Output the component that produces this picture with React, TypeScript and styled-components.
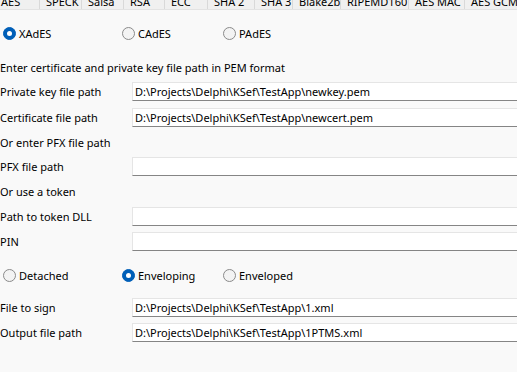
import React from "react";
import styled, { createGlobalStyle } from "styled-components";

const Global = createGlobalStyle`
  html, body { margin: 0; padding: 0; background: #f9f9f9; overflow: hidden; }
  body { font-family: "Noto Sans", "Segoe UI", sans-serif; font-size: 11px; color: #000; }
`;

const Page = styled.div`
  width: 517px;
  height: 372px;
  overflow: hidden;
  background: #f9f9f9;
  display: flex;
  flex-direction: column;
`;

const TabStrip = styled.div`
  height: 9px;
  display: flex;
  background: #f0f0f0;
  border-bottom: 1px solid #e3e3e3;
  overflow: hidden;
  flex-shrink: 0;
`;

const Tab = styled.div<{ $w: number; $pad: number }>`
  width: ${(p) => p.$w}px;
  padding-left: ${(p) => p.$pad}px;
  flex-shrink: 0;
  height: 9px;
  box-sizing: border-box;
  border-right: 1px solid #d9d9d9;
  display: flex;
  align-items: flex-end;
  justify-content: flex-start;
  line-height: 15px;
  white-space: nowrap;
`;

const Row = styled.div<{ $top: number }>`
  margin-top: ${(p) => p.$top}px;
  height: 19px;
  display: flex;
  align-items: center;
  flex-shrink: 0;
  white-space: nowrap;
`;

const Label = styled.div`
  width: 132px;
  flex-shrink: 0;
  line-height: 19px;
`;

const Input = styled.div`
  width: 420px;
  flex-shrink: 0;
  height: 19px;
  box-sizing: border-box;
  background: #fff;
  border-top: 1px solid #e5e5e5;
  border-left: 1px solid #e5e5e5;
  border-bottom: 1px solid #858585;
  padding-left: 2px;
  font-size: 11px;
  line-height: 17px;
  white-space: nowrap;
`;

const RadioOption = styled.div<{ $w: number }>`
  width: ${(p) => p.$w}px;
  flex-shrink: 0;
  display: flex;
  align-items: center;
  gap: 3px;
  padding-left: 3px;
  box-sizing: border-box;
`;

const RadioDot = styled.span<{ $on?: boolean }>`
  width: 13px;
  height: 13px;
  border-radius: 50%;
  box-sizing: border-box;
  flex-shrink: 0;
  position: relative;
  background: ${(p) => (p.$on ? "#005fb8" : "#f3f3f3")};
  border: 1px solid ${(p) => (p.$on ? "#005fb8" : "#8a8a8a")};
  &::after {
    content: "";
    display: ${(p) => (p.$on ? "block" : "none")};
    position: absolute;
    left: 3px;
    top: 3px;
    width: 5px;
    height: 5px;
    border-radius: 50%;
    background: #fff;
  }
`;

const tabs: [string, number][] = [
  ["AES", 40], ["SPECK", 42], ["Salsa", 42], ["RSA", 41], ["ECC", 43],
  ["SHA 2", 47], ["SHA 3", 38], ["Blake2b", 48], ["RIPEMD160", 68],
  ["AES MAC", 56], ["AES GCM", 60],
];

const Radio = ({ label, on, w }: { label: string; on?: boolean; w: number }) => (
  <RadioOption $w={w}>
    <RadioDot $on={on} />
    <span>{label}</span>
  </RadioOption>
);

const Field = ({ top, label, value }: { top: number; label: string; value?: string }) => (
  <Row $top={top}>
    <Label>{label}</Label>
    <Input>{value}</Input>
  </Row>
);

export default function App() {
  return (
    <Page>
      <Global />
      <TabStrip>
        {tabs.map(([t, w], i) => (
          <Tab key={t} $w={w} $pad={i === 0 ? 1 : 6}>{t}</Tab>
        ))}
      </TabStrip>
      <Row $top={14}>
        <Radio label="XAdES" on w={119} />
        <Radio label="CAdES" w={101} />
        <Radio label="PAdES" w={100} />
      </Row>
      <Row $top={15}>Enter certificate and private key file path in PEM format</Row>
      <Field top={5} label="Private key file path" value="D:\Projects\Delphi\KSef\TestApp\newkey.pem" />
      <Field top={7} label="Certificate file path" value="D:\Projects\Delphi\KSef\TestApp\newcert.pem" />
      <Row $top={6}>Or enter PFX file path</Row>
      <Field top={5} label="PFX file path" />
      <Row $top={6}>Or use a token</Row>
      <Field top={6} label="Path to token DLL" />
      <Field top={6} label="PIN" />
      <Row $top={15}>
        <Radio label="Detached" w={119} />
        <Radio label="Enveloping" on w={101} />
        <Radio label="Enveloped" w={100} />
      </Row>
      <Field top={13} label="File to sign" value="D:\Projects\Delphi\KSef\TestApp\1.xml" />
      <Field top={6} label="Output file path" value="D:\Projects\Delphi\KSef\TestApp\1PTMS.xml" />
    </Page>
  );
}
